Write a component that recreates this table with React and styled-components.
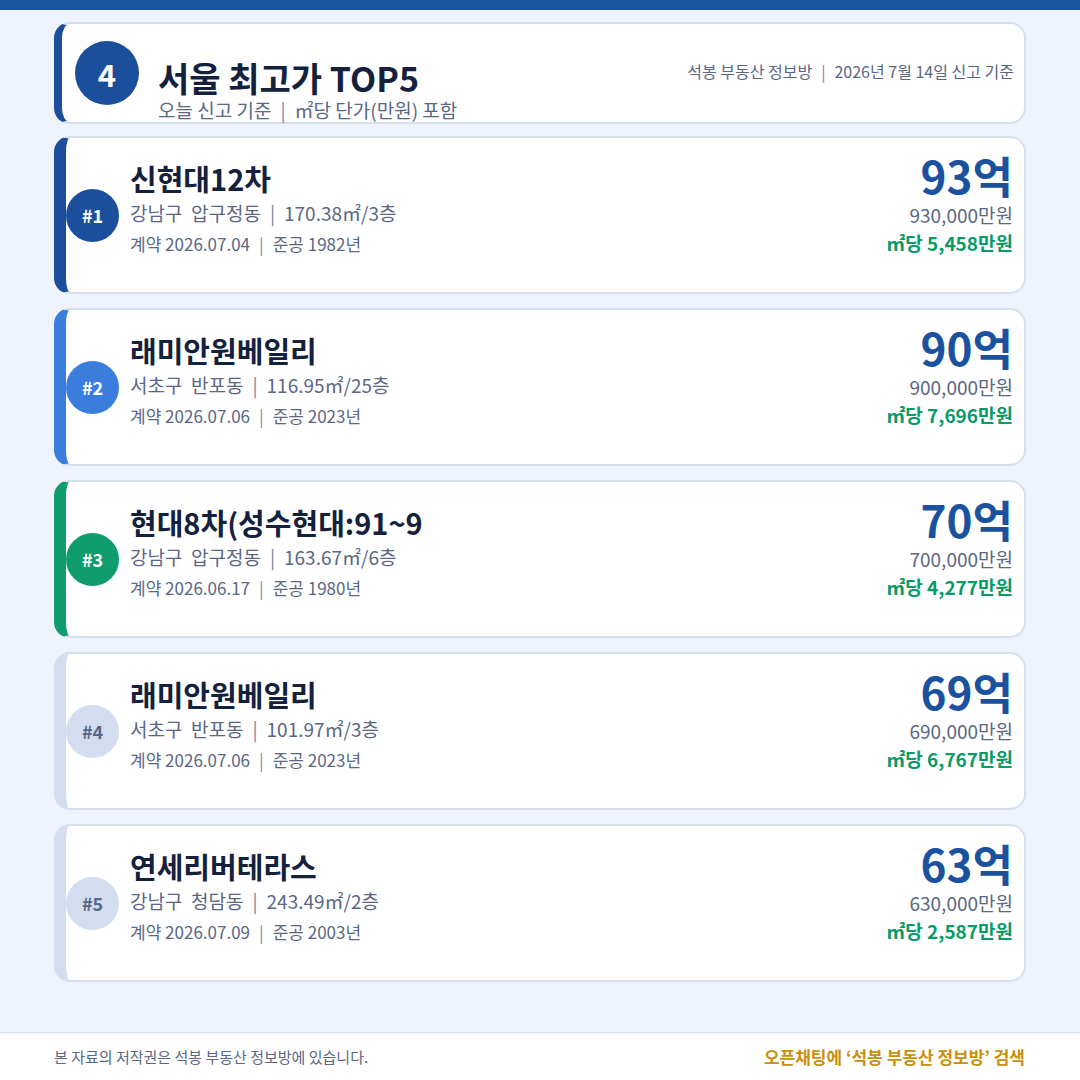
import React from "react";
import styled, { createGlobalStyle } from "styled-components";

const Global = createGlobalStyle`
  html, body { margin: 0; padding: 0; }
  body {
    background: #eef3fd;
    font-family: "Noto Sans CJK KR", "Noto Sans", sans-serif;
    width: 1080px;
    height: 1080px;
    overflow: hidden;
  }
`;

const Page = styled.div`
  width: 1080px;
  height: 1080px;
  display: flex;
  flex-direction: column;
  background: #eef3fd;
`;

const TopBar = styled.div`
  height: 10px;
  background: #1b55a0;
  flex-shrink: 0;
`;

const Main = styled.main`
  flex: 1;
  padding: 12px 54px 0 54px;
  display: flex;
  flex-direction: column;
`;

const HeaderCard = styled.header`
  box-sizing: border-box;
  height: 102px;
  background: #fff;
  border: 2px solid #d5dff0;
  border-left: 8px solid #1b4f9c;
  border-radius: 16px;
  display: flex;
  align-items: flex-start;
  padding: 0 10px 0 13px;
  margin-bottom: 12px;
`;

const BigBadge = styled.div`
  width: 64px;
  height: 64px;
  border-radius: 50%;
  background: #1b4f9c;
  color: #fff;
  font-size: 31px;
  font-weight: 700;
  display: flex;
  align-items: center;
  justify-content: center;
  align-self: center;
  flex-shrink: 0;
`;

const TitleBlock = styled.div`
  margin-left: 19px;
  padding-top: 36px;
  display: flex;
  flex-direction: column;
`;

const Title = styled.h1`
  margin: 0;
  font-size: 34px;
  line-height: 36px;
  font-weight: 700;
  color: #14213d;
`;

const Subtitle = styled.div`
  font-size: 19px;
  line-height: 20px;
  margin-top: 4px;
  color: #5a6785;
`;

const HeaderMeta = styled.div`
  margin-left: auto;
  margin-top: 36px;
  font-size: 16px;
  line-height: 22px;
  color: #5a6785;
`;

const Sep = styled.span`
  margin: 0 ${(p) => p.$gap || 9}px;
  color: #7a86a0;
`;

const List = styled.div`
  display: flex;
  flex-direction: column;
  gap: 14px;
`;

const Card = styled.article`
  box-sizing: border-box;
  height: 158px;
  background: #fff;
  border: 2px solid #d5dff0;
  border-left: 12px solid ${(p) => p.$accent};
  border-radius: 16px;
  display: flex;
  align-items: flex-start;
  padding: 0 11px 0 0;
`;

const RankBadge = styled.div`
  width: 53px;
  height: 53px;
  border-radius: 50%;
  background: ${(p) => p.$bg};
  color: ${(p) => p.$fg};
  font-size: 18px;
  font-weight: 700;
  display: flex;
  align-items: center;
  justify-content: center;
  align-self: center;
  flex-shrink: 0;
`;

const Info = styled.div`
  margin-left: 11px;
  padding-top: 22px;
  display: flex;
  flex-direction: column;
`;

const Name = styled.div`
  font-size: 29px;
  line-height: 36px;
  font-weight: 700;
  color: #14213d;
`;

const Location = styled.div`
  font-size: 19px;
  line-height: 25px;
  margin-top: 4px;
  color: #5a6785;
  white-space: pre;
`;

const Contract = styled.div`
  font-size: 17px;
  line-height: 22px;
  margin-top: 8px;
  color: #5a6785;
`;

const PriceCol = styled.div`
  margin-left: auto;
  padding-top: 15px;
  display: flex;
  flex-direction: column;
  align-items: flex-end;
`;

const BigPrice = styled.div`
  font-size: 44px;
  line-height: 44px;
  font-weight: 700;
  color: #1b52a0;
`;

const Manwon = styled.div`
  font-size: 19px;
  line-height: 22px;
  margin-top: 7px;
  color: #5a6785;
`;

const PerM2 = styled.div`
  font-size: 19px;
  line-height: 22px;
  margin-top: 6px;
  font-weight: 700;
  color: #0a9a68;
`;

const Footer = styled.footer`
  height: 48px;
  box-sizing: border-box;
  background: #fff;
  border-top: 1px solid #d5dff0;
  display: flex;
  align-items: center;
  justify-content: space-between;
  padding: 0 55px 0 54px;
  flex-shrink: 0;
`;

const Copyright = styled.div`
  font-size: 15px;
  color: #5a6785;
`;

const Promo = styled.div`
  font-size: 17px;
  font-weight: 700;
  color: #c8900c;
`;

const items = [
  {
    rank: 1,
    name: "신현대12차",
    loc: "강남구  압구정동",
    area: "170.38㎡/3층",
    date: "2026.07.04",
    built: "1982년",
    price: "93억",
    man: "930,000만원",
    per: "5,458만원",
    accent: "#1b4f9c",
    bg: "#1b4f9c",
    fg: "#ffffff",
  },
  {
    rank: 2,
    name: "래미안원베일리",
    loc: "서초구  반포동",
    area: "116.95㎡/25층",
    date: "2026.07.06",
    built: "2023년",
    price: "90억",
    man: "900,000만원",
    per: "7,696만원",
    accent: "#3b7ddd",
    bg: "#3b7ddd",
    fg: "#ffffff",
  },
  {
    rank: 3,
    name: "현대8차(성수현대:91~9",
    loc: "강남구  압구정동",
    area: "163.67㎡/6층",
    date: "2026.06.17",
    built: "1980년",
    price: "70억",
    man: "700,000만원",
    per: "4,277만원",
    accent: "#0f9d6e",
    bg: "#0f9d6e",
    fg: "#ffffff",
  },
  {
    rank: 4,
    name: "래미안원베일리",
    loc: "서초구  반포동",
    area: "101.97㎡/3층",
    date: "2026.07.06",
    built: "2023년",
    price: "69억",
    man: "690,000만원",
    per: "6,767만원",
    accent: "#d2ddf0",
    bg: "#d2ddf0",
    fg: "#56688a",
  },
  {
    rank: 5,
    name: "연세리버테라스",
    loc: "강남구  청담동",
    area: "243.49㎡/2층",
    date: "2026.07.09",
    built: "2003년",
    price: "63억",
    man: "630,000만원",
    per: "2,587만원",
    accent: "#d2ddf0",
    bg: "#d2ddf0",
    fg: "#56688a",
  },
];

export default function App() {
  return (
    <>
      <Global />
      <Page>
        <TopBar />
        <Main>
          <HeaderCard>
            <BigBadge>4</BigBadge>
            <TitleBlock>
              <Title>서울 최고가 TOP5</Title>
              <Subtitle>
                오늘 신고 기준<Sep $gap={9}>|</Sep>㎡당 단가(만원) 포함
              </Subtitle>
            </TitleBlock>
            <HeaderMeta>
              석봉 부동산 정보방<Sep>|</Sep>2026년 7월 14일 신고 기준
            </HeaderMeta>
          </HeaderCard>
          <List>
            {items.map((it) => (
              <Card key={it.rank} $accent={it.accent}>
                <RankBadge $bg={it.bg} $fg={it.fg}>
                  #{it.rank}
                </RankBadge>
                <Info>
                  <Name>{it.name}</Name>
                  <Location>
                    {it.loc}
                    <Sep>|</Sep>
                    {it.area}
                  </Location>
                  <Contract>
                    계약 {it.date}
                    <Sep>|</Sep>
                    준공 {it.built}
                  </Contract>
                </Info>
                <PriceCol>
                  <BigPrice>{it.price}</BigPrice>
                  <Manwon>{it.man}</Manwon>
                  <PerM2>㎡당 {it.per}</PerM2>
                </PriceCol>
              </Card>
            ))}
          </List>
        </Main>
        <Footer>
          <Copyright>본 자료의 저작권은 석봉 부동산 정보방에 있습니다.</Copyright>
          <Promo>오픈채팅에 ‘석봉 부동산 정보방’ 검색</Promo>
        </Footer>
      </Page>
    </>
  );
}
